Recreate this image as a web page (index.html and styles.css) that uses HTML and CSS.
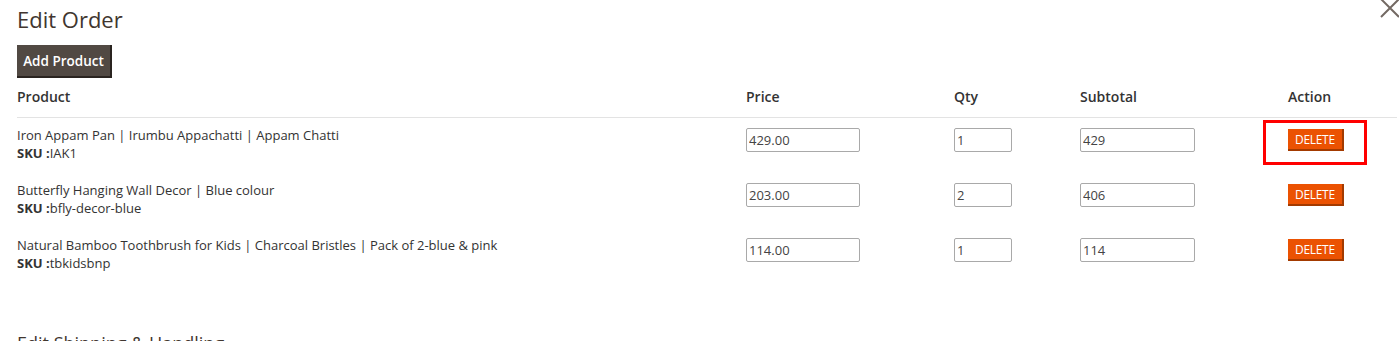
FILE: index.html
```html
<!DOCTYPE html>
<html lang="en">
<head>
  <meta charset="UTF-8">
  <title>Edit Order</title>
  <link rel="stylesheet" href="styles.css">
</head>
<body>
  <div class="modal">
    <button class="close" aria-label="Close">
      <svg width="22" height="22" viewBox="0 0 22 22"><path d="M2 1 L20 19 M20 1 L2 19" stroke="#736963" stroke-width="2" fill="none"/></svg>
    </button>
    <h1 class="title">Edit Order</h1>
    <button class="btn-add">Add Product</button>

    <table class="items">
      <thead>
        <tr>
          <th class="col-product">Product</th>
          <th class="col-price">Price</th>
          <th class="col-qty">Qty</th>
          <th class="col-subtotal">Subtotal</th>
          <th class="col-action">Action</th>
        </tr>
      </thead>
      <tbody>
        <tr>
          <td>Iron Appam Pan | Irumbu Appachatti | Appam Chatti<br><b>SKU :</b>IAK1</td>
          <td><input class="in-price" type="text" value="429.00"></td>
          <td><input class="in-qty" type="text" value="1"></td>
          <td><input class="in-subtotal" type="text" value="429"></td>
          <td class="cell-action"><button class="btn-delete">DELETE</button><span class="highlight"></span></td>
        </tr>
        <tr>
          <td>Butterfly Hanging Wall Decor | Blue colour<br><b>SKU :</b>bfly-decor-blue</td>
          <td><input class="in-price" type="text" value="203.00"></td>
          <td><input class="in-qty" type="text" value="2"></td>
          <td><input class="in-subtotal" type="text" value="406"></td>
          <td class="cell-action"><button class="btn-delete">DELETE</button></td>
        </tr>
        <tr>
          <td>Natural Bamboo Toothbrush for Kids | Charcoal Bristles | Pack of 2-blue &amp; pink<br><b>SKU :</b>tbkidsbnp</td>
          <td><input class="in-price" type="text" value="114.00"></td>
          <td><input class="in-qty" type="text" value="1"></td>
          <td><input class="in-subtotal" type="text" value="114"></td>
          <td class="cell-action"><button class="btn-delete">DELETE</button></td>
        </tr>
      </tbody>
    </table>

    <h2 class="subtitle">Edit Shipping &amp; Handling</h2>
  </div>
</body>
</html>
```

FILE: styles.css
```css
body {
  margin: 0;
  font-family: "Open Sans", "Liberation Sans", sans-serif;
  color: #333;
  background: #fff;
  overflow: hidden;
}
.modal {
  position: relative;
  padding: 4px 2px 0 17px;
}
.close {
  position: absolute;
  top: -2px;
  right: -2px;
  padding: 0;
  border: none;
  background: none;
}
.title {
  margin: 0 0 11px;
  font-size: 22px;
  line-height: 30px;
  font-weight: 400;
  color: #41362f;
}
.btn-add {
  display: block;
  box-sizing: border-box;
  width: 95px;
  height: 33px;
  padding: 0;
  border: none;
  border-right: 2px solid #2a2420;
  border-bottom: 2px solid #2a2420;
  background: #514943;
  color: #fff;
  font-family: inherit;
  font-size: 13.5px;
  font-weight: 600;
}
.items {
  width: 100%;
  border-collapse: collapse;
  font-size: 13px;
  line-height: 18px;
}
.items th {
  text-align: left;
  font-size: 14px;
  font-weight: 600;
  padding: 10px 0 11px;
  border-bottom: 1px solid #e3e3e3;
}
.col-product { width: 729px; }
.col-price { width: 208px; }
.col-qty { width: 126px; }
.col-subtotal { width: 208px; }
.items td {
  vertical-align: top;
  padding: 8px 0 11px;
}
.items td b { font-weight: 700; }
.items input {
  box-sizing: border-box;
  height: 24px;
  margin-top: 2px;
  padding: 0 2px;
  border: 1px solid #a9a9a9;
  border-radius: 2px;
  font-family: inherit;
  font-size: 13px;
  color: #444;
}
.in-price { width: 114px; }
.in-qty { width: 58px; }
.in-subtotal { width: 115px; }
.cell-action { position: relative; }
.highlight {
  position: absolute;
  top: 2px;
  left: -25px;
  width: 98px;
  height: 39px;
  border: 3px solid #ff0000;
}
.btn-delete {
  display: block;
  height: 22px;
  margin-top: 3px;
  padding: 0 7px;
  border: none;
  border-right: 2px solid #a33a00;
  border-bottom: 2px solid #a33a00;
  background: #eb5202;
  color: #fff;
  font-family: inherit;
  font-size: 12px;
  letter-spacing: -0.3px;
}
.subtitle {
  margin: 48px 0 0;
  font-size: 18px;
  line-height: 24px;
  font-weight: 400;
  color: #41362f;
}
```
